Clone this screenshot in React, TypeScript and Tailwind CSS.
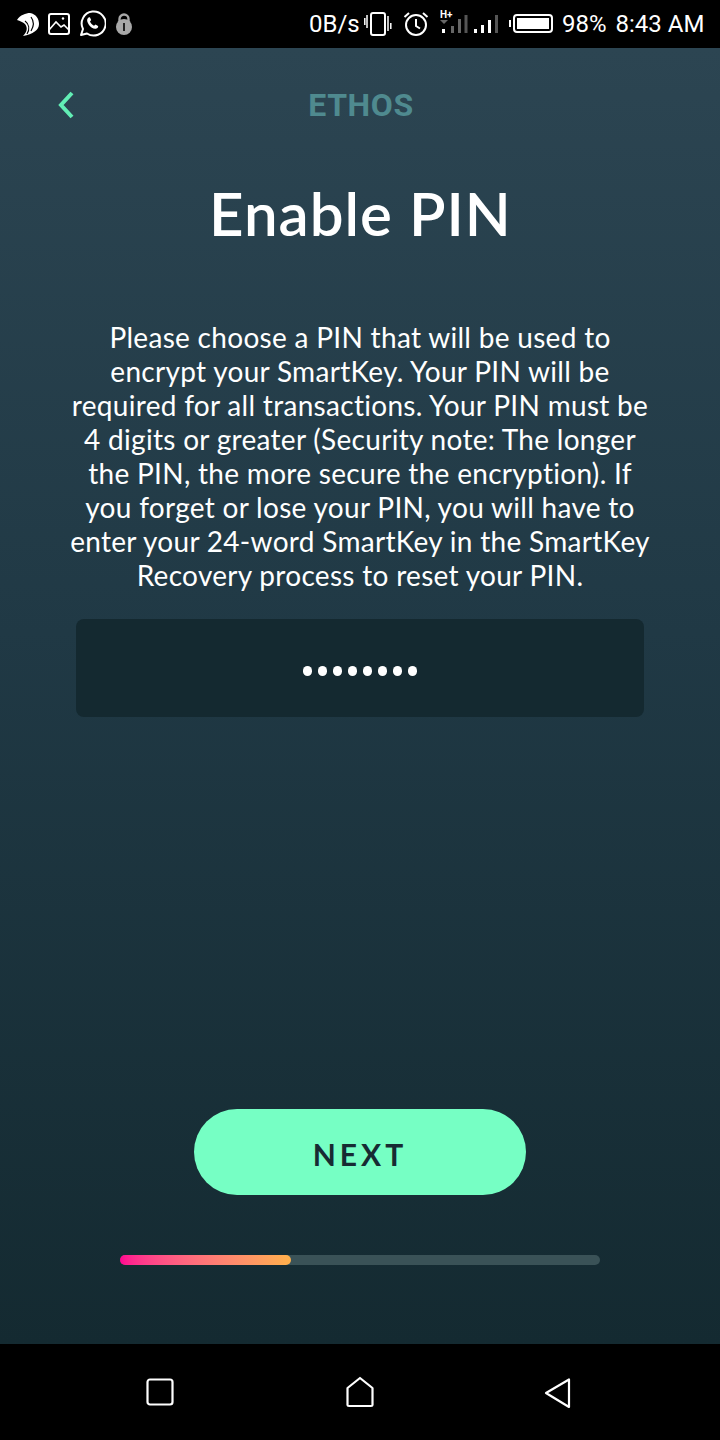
export default function App() {
  const lines = [
    "Please choose a PIN that will be used to",
    "encrypt your SmartKey. Your PIN will be",
    "required for all transactions. Your PIN must be",
    "4 digits or greater (Security note: The longer",
    "the PIN, the more secure the encryption). If",
    "you forget or lose your PIN, you will have to",
    "enter your 24-word SmartKey in the SmartKey",
    "Recovery process to reset your PIN.",
  ];
  return (
    <div className="w-[720px] h-[1440px] flex flex-col bg-black overflow-hidden font-['Lato',sans-serif]">
      <div className="h-12 shrink-0 bg-black flex items-center text-white font-['Roboto',sans-serif] text-[24px] pl-4">
        <svg width="24" height="26" viewBox="0 0 24 26">
          <path d="M1 9 C4 4 10 2 14 2 C20 3 23 8 23 13 C23 19 17 23 7 25 C11 21 12 17 9 13 C7 11 4 10 1 9Z" fill="#fff" />
          <path d="M9 10 C13 13 14 18 11 23 M15 6 C18 10 18 15 15 20" stroke="#000" strokeWidth="1.2" fill="none" />
        </svg>
        <svg width="24" height="24" viewBox="0 0 24 24" className="ml-[7px]" fill="none" stroke="#fff" strokeWidth="2">
          <rect x="2" y="2" width="20" height="20" rx="2" />
          <path d="M2 18 L9 10 L14 15 L17 13 L22 18" strokeWidth="1.6" />
          <circle cx="16" cy="6.5" r="1.2" fill="#fff" stroke="none" />
        </svg>
        <svg width="28" height="28" viewBox="0 0 28 28" className="ml-[7px]" fill="none">
          <path d="M3 25 L5 19 A12 12 0 1 1 9 23.5 Z" stroke="#fff" strokeWidth="2" strokeLinejoin="round" />
          <path d="M10 8 C8.5 9.5 9 12 11 15 C13 17.5 16 19.5 18.5 18.5 C20 18 20.5 16.5 20 16 L17.5 14.5 L16 15.8 C14.5 15.2 12.5 13 12 11.5 L13.2 10 L12 7.5 C11.5 7 10.5 7.3 10 8Z" fill="#fff" />
        </svg>
        <svg width="18" height="24" viewBox="0 0 18 24" className="ml-[9px]">
          <path d="M4.5 11 V7 A4.5 4.5 0 0 1 13.5 7 V11" fill="none" stroke="#a8a8a8" strokeWidth="2.4" />
          <circle cx="9" cy="15" r="8" fill="#a8a8a8" />
          <rect x="8" y="11" width="2" height="8" fill="#222" />
        </svg>
        <span className="ml-[176px] w-[50px] whitespace-nowrap">0B/s</span>
        <svg width="28" height="28" viewBox="0 0 28 28" className="ml-[5px]" fill="none" stroke="#fff" strokeWidth="2">
          <rect x="7" y="3" width="14" height="22" rx="2" />
          <path d="M3 5 V18 M24 6 V21 M0.8 8 V15 M26.8 13 V19" strokeWidth="1.5" />
        </svg>
        <svg width="28" height="28" viewBox="0 0 28 28" className="ml-[10px]" fill="none" stroke="#fff" strokeWidth="2">
          <circle cx="14" cy="15" r="10" />
          <path d="M14 9 V16 L18 18.5 M2.5 7 L7 3 M25.5 7 L21 3" />
        </svg>
        <svg width="60" height="28" viewBox="0 0 60 28" className="ml-[10px]">
          <text x="0" y="8" fontSize="10" fontWeight="700" fill="#fff" fontFamily="Roboto">H+</text>
          <path d="M0 10 H8 L4 14Z" fill="#666" />
          <rect x="2" y="19" width="3" height="4" fill="#fff" />
          <rect x="11" y="16" width="3" height="7" fill="#666" />
          <rect x="18" y="9" width="3" height="14" fill="#666" />
          <rect x="24.5" y="5" width="3" height="18" fill="#555" />
          <rect x="34" y="19" width="3" height="4" fill="#fff" />
          <rect x="41" y="15" width="3" height="8" fill="#fff" />
          <rect x="48" y="10" width="3" height="13" fill="#fff" />
          <rect x="55" y="5" width="3" height="18" fill="#555" />
        </svg>
        <svg width="47" height="22" viewBox="0 0 47 22" className="ml-[8px]">
          <rect x="1" y="7" width="2" height="7" fill="#fff" />
          <rect x="6" y="2" width="38" height="17" rx="3" fill="none" stroke="#fff" strokeWidth="2" />
          <rect x="9" y="5" width="32" height="11" fill="#fff" />
        </svg>
        <span className="ml-[7px] whitespace-nowrap">98%</span>
        <span className="ml-[9px] whitespace-nowrap">8:43 AM</span>
      </div>

      <div className="h-[1296px] shrink-0 flex flex-col items-center bg-gradient-to-b from-[#2c4552] via-[#203945] via-45% to-[#142a31] relative">
        <div className="w-full h-[114px] shrink-0 flex items-center justify-center relative">
          <svg width="20" height="28" viewBox="0 0 20 28" fill="none" stroke="#62eeb5" strokeWidth="4" className="absolute left-[56px] top-[43px]">
            <path d="M16 2 L5 14 L16 26" />
          </svg>
          <span className="pl-[2px] font-['Roboto',sans-serif] font-bold text-[32px] tracking-[0.6px] text-[#4f8a8f]">ETHOS</span>
        </div>
        <h1 className="mt-[19px] pl-[1px] text-[60px] leading-[64px] font-semibold text-white tracking-[1px]">Enable PIN</h1>
        <div className="mt-[75px] text-center text-white text-[28px] leading-[34px] tracking-[0.3px]">
          {lines.map((l) => (
            <div key={l} className="whitespace-nowrap">{l}</div>
          ))}
        </div>
        <div className="mt-[27px] pt-[6px] w-[568px] h-[98px] rounded-lg bg-[#142930] flex items-center justify-center gap-[5.5px]">
          {Array.from({ length: 8 }).map((_, i) => (
            <span key={i} className="w-[9.5px] h-[9.5px] rounded-full bg-white" />
          ))}
        </div>
        <div className="mt-[392px] pt-[5px] w-[332px] h-[86px] rounded-full bg-[#76ffc4] flex items-center justify-center text-[30px] font-bold tracking-[4px] text-[#172b33]">
          NEXT
        </div>
        <div className="mt-[60px] w-[480px] h-[10px] rounded-full bg-[#3a5257]">
          <div className="w-[171px] h-[10px] rounded-full bg-gradient-to-r from-[#ff0090] to-[#ffb04a]" />
        </div>
      </div>

      <div className="h-24 shrink-0 bg-black flex items-center">
        <svg width="28" height="30" viewBox="0 0 28 30" className="ml-[146px]" fill="none" stroke="#fff" strokeWidth="2.2">
          <rect x="1.5" y="2.5" width="25" height="25" rx="2.5" />
        </svg>
        <svg width="30" height="32" viewBox="0 0 30 32" className="ml-[171px]" fill="none" stroke="#fff" strokeWidth="2.2" strokeLinejoin="round">
          <path d="M15 2 L27.5 12 V29 C27.5 30 27 30 26 30 H4 C3 30 2.5 30 2.5 29 V12 Z" />
        </svg>
        <svg width="28" height="32" viewBox="0 0 28 32" className="ml-[169px] mt-[1px]" fill="none" stroke="#fff" strokeWidth="2.2" strokeLinejoin="round">
          <path d="M2 16 L25 2.5 V30 Z" />
        </svg>
      </div>
    </div>
  );
}
